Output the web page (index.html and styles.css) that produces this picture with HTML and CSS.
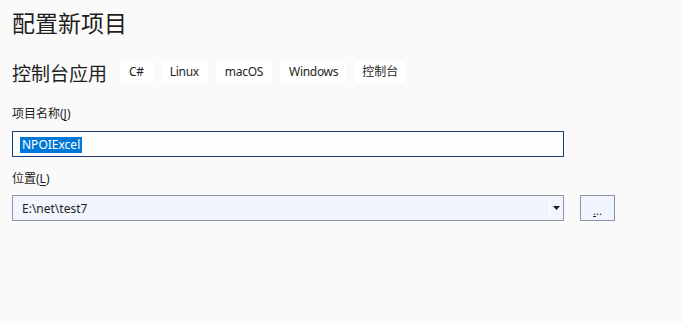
FILE: index.html
```html
<html>

<head>
    <link rel="stylesheet" href="styles.css">
</head>

<body>

    <div class="page">
        <h1 class="title">配置新项目</h1>

        <div class="template">
            <span class="template-name">控制台应用</span>
            <span class="tag">C#</span>
            <span class="tag">Linux</span>
            <span class="tag">macOS</span>
            <span class="tag">Windows</span>
            <span class="tag tag-cjk">控制台</span>
        </div>

        <label class="field-label" for="name">项目名称(<u>J</u>)</label>
        <div class="textbox"><span class="selected">NPOIExcel</span></div>

        <label class="field-label field-label-second" for="location">位置(<u>L</u>)</label>
        <div class="location-row">
            <div class="combo">
                <span class="combo-text">E:\net\test7</span>
                <span class="combo-arrow">
                    <svg width="7" height="4" viewBox="0 0 7 4">
                        <path d="M0 0H7L3.5 4Z" fill="#1e1e1e" />
                    </svg>
                </span>
            </div>
            <button class="browse"><u>.</u>..</button>
        </div>
    </div>

</body>

</html>
```

FILE: styles.css
```css
body,
html {
    background: #fafafa;
    margin: 0;
    height: 100%;
    width: 100%;
}

.page {
    padding: 7px 12px 0 12px;
    font-family: "Noto Sans", "Noto Sans CJK SC", sans-serif;
    color: #1e1e1e;
}

.title {
    margin: 0;
    font-family: "Noto Sans CJK SC", sans-serif;
    font-size: 23px;
    font-weight: normal;
    line-height: 30px;
}

.template {
    display: flex;
    align-items: center;
    margin-top: 24px;
    height: 22px;
}

.template-name {
    font-family: "Noto Sans CJK SC", sans-serif;
    font-size: 19px;
    margin-right: 13px;
}

.tag {
    background: #ffffff;
    border-radius: 4px;
    font-size: 12px;
    letter-spacing: -0.3px;
    height: 22px;
    line-height: 22px;
    padding: 0 9px;
    margin-right: 8px;
}

.tag-cjk {
    padding: 0 7px;
    letter-spacing: 0;
}

.field-label {
    display: block;
    font-size: 12px;
    line-height: 16px;
    margin-top: 23px;
}

.field-label-second {
    margin-top: 14px;
}

.field-label u {
    text-underline-offset: 2px;
}

.textbox {
    box-sizing: border-box;
    width: 552px;
    height: 26px;
    margin-top: 9px;
    border: 1px solid #1f3c78;
    background: #fdfdfd;
    padding: 5px 0 0 7px;
    font-size: 12px;
}

.selected {
    display: inline-block;
    background: #0078d7;
    color: #ffffff;
    line-height: 16px;
    padding: 0 2px;
}

.location-row {
    display: flex;
    gap: 16px;
    margin-top: 8px;
}

.combo {
    box-sizing: border-box;
    display: flex;
    align-items: center;
    width: 552px;
    height: 26px;
    border: 1px solid #8b93a7;
    background: #f1f5fd;
    font-size: 12px;
}

.combo-text {
    flex: 1;
    padding-left: 9px;
}

.combo-arrow {
    display: flex;
    align-items: center;
    justify-content: center;
    width: 13px;
    height: 100%;
    border-left: 1px solid #ffffff;
}

.browse {
    box-sizing: border-box;
    width: 35px;
    height: 26px;
    border: 1px solid #8b93a7;
    background: #f1f5fd;
    font-family: "Noto Sans", sans-serif;
    font-size: 11px;
    color: #1e1e1e;
    padding: 4px 0 0 0;
    line-height: 1;
}
```
